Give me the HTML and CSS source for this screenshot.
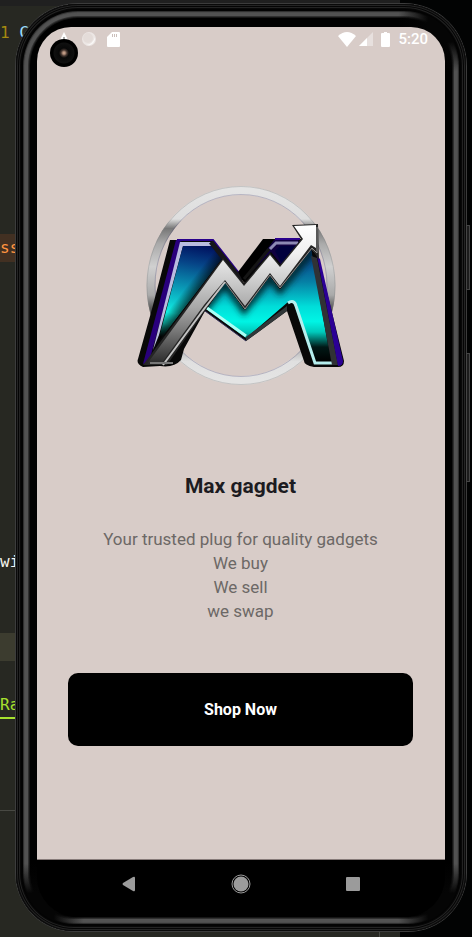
FILE: index.html
```html
<!DOCTYPE html>
<html lang="en">
<head>
<meta charset="utf-8">
<meta name="viewport" content="width=device-width, initial-scale=1">
<title>Max gagdet</title>
<link rel="stylesheet" href="styles.css">
</head>
<body>
<div class="desktop">
  <div class="editor">
    <div class="editor-bar"></div>
    <div class="code first"><span class="number">1</span> <span class="symbol">C</span></div>
    <div class="code match">ss</div>
    <div class="code plain">wi</div>
    <div class="code current"></div>
    <div class="code type"><span>Ra</span></div>
    <div class="editor-panel"></div>
  </div>

  <div class="phone">
    <i class="side-key power"></i>
    <i class="side-key volume"></i>
    <div class="screen">
      <header class="status">
        <div class="status-group">
          <svg class="warning" viewBox="0 0 14 14" width="14" height="14"><path d="M7 0 14 14H0z" fill="#fff"/><path d="M6 5h2v4H6z" fill="#aaa"/></svg>
          <svg viewBox="0 0 16 16" width="16" height="16"><circle cx="8" cy="8" r="7" fill="#fff" opacity=".5"/><circle cx="7" cy="7" r="5" fill="#d9cdc9" opacity=".4"/><path d="M14 6A7 7 0 0 1 5 14Q12 13 14 6" fill="#fff" opacity=".7"/></svg>
          <svg viewBox="0 0 13 15" width="13" height="15"><path d="M5 0h7a1 1 0 0 1 1 1v13a1 1 0 0 1-1 1H1a1 1 0 0 1-1-1V5z" fill="#fff"/><path d="M5 2h1v3H5zM7 2h1v3H7zM9 2h1v3H9z" fill="#cbbfbb"/></svg>
        </div>
        <div class="status-group right">
          <svg viewBox="0 0 18 15" width="18" height="15"><path d="M0 4Q9-4 18 4L9 15z" fill="#fff"/></svg>
          <svg class="signal" viewBox="0 0 14 14" width="14" height="14"><path d="M14 0v14H0z" fill="#fff" opacity=".4"/><path d="M8 6v8H0z" fill="#fff"/></svg>
          <svg class="battery" viewBox="0 0 9 15" width="9" height="15"><path d="M3 0h3v1h2q1 0 1 1v12q0 1-1 1H1q-1 0-1-1V2q0-1 1-1h2z" fill="#fff"/></svg>
          <time>5:20</time>
        </div>
      </header>
      <i class="camera"></i>

      <main class="welcome">
        <svg class="logo" viewBox="126 175 230 220" width="230" height="220" role="img" aria-label="Max gagdet logo">
          <defs>
            <linearGradient id="ring" x1="0" y1="0" x2="0" y2="1">
              <stop offset="0" stop-color="#e4e4e4"/><stop offset=".15" stop-color="#dedede"/><stop offset=".2" stop-color="#777"/><stop offset=".28" stop-color="#aaa"/><stop offset=".4" stop-color="#d0d0d0"/><stop offset=".55" stop-color="#aaa"/><stop offset=".65" stop-color="#333"/><stop offset=".82" stop-color="#aaa"/><stop offset=".9" stop-color="#e0e0e0"/><stop offset="1" stop-color="#e4e4e4"/>
            </linearGradient>
            <linearGradient id="leftFace" gradientUnits="userSpaceOnUse" x1="196" y1="244" x2="180" y2="340">
              <stop offset="0" stop-color="#00105e"/><stop offset=".2" stop-color="#064487"/><stop offset=".5" stop-color="#0aa3bb"/><stop offset=".74" stop-color="#10f0e4"/><stop offset=".86" stop-color="#0cb7a9"/><stop offset="1" stop-color="#000"/>
            </linearGradient>
            <linearGradient id="leftShade" gradientUnits="userSpaceOnUse" x1="180" y1="295" x2="193" y2="305">
              <stop offset="0" stop-color="#000" stop-opacity="0"/><stop offset="1" stop-color="#000" stop-opacity=".9"/>
            </linearGradient>
            <linearGradient id="rightFace" gradientUnits="userSpaceOnUse" x1="0" y1="255" x2="0" y2="362">
              <stop offset="0" stop-color="#053b86"/><stop offset=".25" stop-color="#0680a5"/><stop offset=".48" stop-color="#00ddd9"/><stop offset=".62" stop-color="#00f5e5"/><stop offset=".72" stop-color="#00c9bb"/><stop offset=".86" stop-color="#001816"/><stop offset="1" stop-color="#000"/>
            </linearGradient>
            <linearGradient id="metal" gradientUnits="userSpaceOnUse" x1="0" y1="225" x2="0" y2="367">
              <stop offset="0" stop-color="#fff"/><stop offset=".2" stop-color="#f0f0f0"/><stop offset=".38" stop-color="#cfcfcf"/><stop offset=".58" stop-color="#a8a8a8"/><stop offset=".75" stop-color="#777"/><stop offset="1" stop-color="#222"/>
            </linearGradient>
            <filter id="soft" x="-20%" y="-20%" width="140%" height="140%"><feGaussianBlur stdDeviation="3"/></filter>
            <clipPath id="rightClip"><path d="M225 283 244 310 270 277 280 290 311 249 331 362H314L294 302H288L246 338 207 309z"/></clipPath>
          </defs>
          <ellipse cx="241" cy="285.5" rx="90" ry="95" fill="none" stroke="url(#ring)" stroke-width="9"/>
          <ellipse cx="241" cy="285.5" rx="94" ry="99" fill="none" stroke="#888" stroke-width="1" opacity=".35"/>
          <ellipse cx="241" cy="285.5" rx="86" ry="91" fill="none" stroke="#4f4a78" stroke-width="1" opacity=".3"/>

          <path d="M170 240H213L244 283 264 239H302L318 256 344 361Q344 367 338 367H314Q304 365 304 361L287 311 246 341 205 311 184 349 181 360Q174 368 160 366L143 367Q136 364 138 359L152 309z" fill="#080808"/>
          <path d="M177 240H213L242 277" fill="none" stroke="#29008b" stroke-width="2"/>
          <path d="M176 240 143 364 149 362 182 242z" fill="#29007c"/>
          <path d="M180 242H210L215 246H183L159 335 153 350z" fill="#b9bce0"/>
          <path d="M183 246H213L223 257 158 342z" fill="url(#leftFace)"/>
          <path d="M183 246H213L223 257 158 342z" fill="url(#leftShade)"/>
          <path d="M211 242 242 281" stroke="#161619" stroke-width="5"/>
          <path d="M238 272 263 239H274L244 283z" fill="#000"/>
          <path d="M244 279 274 240H298L304 246 283 267 271 252z" fill="#100040"/>
          <path d="M244 279 269 249" stroke="#151515" stroke-width="3"/>
          <path d="M270 249 276 243H298" fill="none" stroke="#8d89b4" stroke-width="3"/>
          <path d="M275 239H300" stroke="#29008b" stroke-width="2"/>
          <path d="M275 251 280 246H298L282 264z" fill="#00003d"/>

          <path d="M225 283 244 310 270 277 280 290 311 249 331 362H314L294 302H288L246 338 207 309z" fill="url(#rightFace)"/>
          <g clip-path="url(#rightClip)"><path d="M201 314 225 283 244 310 270 277 280 290 314 249" fill="none" stroke="#002629" stroke-width="7" filter="url(#soft)"/></g>
          <path d="M207 308 246 336" stroke="#a9fff5" stroke-width="3"/>
          <path d="M205 311 246 341" stroke="#33305a" stroke-width="1"/>
          <path d="M246 337 287 306V311L246 341z" fill="#303739"/>
          <path d="M287 309 292 303 311 362 306 361z" fill="#080808"/>
          <path d="M288 303Q294 299 296 306L315 363H335" fill="none" stroke="#b5eeee" stroke-width="3"/>
          <path d="M311 256 317 258 338 365H332z" fill="#303235"/>
          <path d="M317 256 320 259 343 361Q343 366 338 366z" fill="#2b0095"/>

          <path d="M143 365 223 258 244 284 270 253 280 265 301 239 292 225 318 224 319 260 312 249 280 289 270 276 245 310 225 283 207 308 167 365z" fill="#252525"/>
          <path d="M147 364 223 260 244 286 270 255 280 267 303 239 294 226 316 225 316 248 311 245 280 286 270 273 245 306 225 280 204 305 161 364z" fill="url(#metal)"/>
          <path d="M317 227 317 253 312 248 280 288 270 275 245 309 225 282" fill="none" stroke="#8d8d8d" stroke-width="1"/>
          <path d="M163 365 204 309 225 282" fill="none" stroke="#c2c2c2" stroke-width="2"/>
          <path d="M150 363H173" stroke="#777" stroke-width="2"/>
        </svg>
        <h1>Max gagdet</h1>
        <p>Your trusted plug for quality gadgets<br>We buy<br>We sell<br>we swap</p>
        <button class="shop" type="button">Shop Now</button>
      </main>

      <nav class="system-nav">
        <button type="button" aria-label="Back"><svg viewBox="0 0 20 20" width="20" height="20"><path d="M14 3Q16 2 16 4V16Q16 18 14 17L4 11Q3 10 4 9z" fill="#9b9b9b"/></svg></button>
        <button type="button" aria-label="Home"><svg viewBox="0 0 20 20" width="20" height="20"><circle cx="10" cy="10" r="9" fill="none" stroke="#9b9b9b" stroke-width="1"/><circle cx="10" cy="10" r="7.5" fill="#9b9b9b"/></svg></button>
        <button type="button" aria-label="Recent apps"><svg viewBox="0 0 20 20" width="20" height="20"><rect x="3" y="3" width="14" height="14" rx="1" fill="#9b9b9b"/></svg></button>
      </nav>
    </div>
  </div>
</div>
</body>
</html>
```

FILE: styles.css
```css
* {
  box-sizing: border-box;
}

body {
  margin: 0;
  background: #020303;
  font-family: Roboto, "Liberation Sans", sans-serif;
}

.desktop {
  display: grid;
  min-height: 100vh;
  overflow: hidden;
}

.editor,
.phone {
  grid-area: 1 / 1;
}

.editor {
  display: flex;
  flex-direction: column;
  margin-right: 72px;
  background: #272822;
  font: 16px/28px "DejaVu Sans Mono", monospace;
}

.editor-bar {
  height: 6px;
  background: #202020;
}

.code {
  flex: none;
  height: 28px;
}

.first {
  margin-top: 13px;
}

.number {
  color: #a58a10;
}

.symbol {
  color: #9cdcff;
}

.match {
  margin-top: 187px;
  background: #423022;
  color: #ff9440;
}

.plain {
  margin-top: 286px;
  color: #f4f4ee;
}

.current {
  margin-top: 57px;
  background: #3c3c2f;
}

.type {
  margin-top: 30px;
  color: #a6e22e;
}

.type span {
  display: inline-block;
  height: 28px;
  border-bottom: 2px solid #a6e22e;
}

.editor-panel {
  flex: 1;
  margin-top: 91px;
  margin-right: 20px;
  border-top: 1px solid #484943;
  border-right: 1px solid #484943;
}

.phone {
  position: relative;
  display: flex;
  min-height: calc(100vh - 10px);
  margin: 4px 6px 6px 16px;
  padding: 23px 21px 14px;
  border-radius: 62px 62px 58px 58px;
  background: #000;
  box-shadow:
    0 0 0 1px #3c3c3c,
    inset 0 0 0 1px #0a0a0a,
    inset 0 0 0 2px #242424,
    inset 0 0 0 3px #050505,
    inset 0 0 0 4px #232323,
    inset 0 0 0 5px #080808,
    inset 0 0 0 7px #030303,
    inset 0 0 0 8px #303030,
    inset 0 0 0 9px #4c4c4c,
    inset 0 0 0 12px #525252,
    inset 0 0 0 13px #303030,
    inset 0 0 0 14px #161616;
}

/* The metal rim falls into shadow at three of the corners. */
.phone::before {
  position: absolute;
  inset: 6px;
  border-radius: 56px 56px 52px 52px;
  background:
    radial-gradient(circle at calc(100% - 12px) 12px, #050505 20px, transparent 50px),
    radial-gradient(circle at calc(100% - 12px) calc(100% - 12px), #050505 20px, transparent 50px),
    radial-gradient(circle at 12px calc(100% - 12px), #050505 20px, transparent 50px);
  content: "";
}

.side-key {
  position: absolute;
  left: 100%;
  width: 4px;
  border: 1px solid #444;
  background: #1c1c1c;
}

.power {
  top: 221px;
  height: 65px;
}

.volume {
  top: 349px;
  height: 129px;
}

.screen {
  position: relative;
  display: flex;
  flex: 1;
  flex-direction: column;
  min-width: 0;
  overflow: hidden;
  border-radius: 34px 34px 40px 40px;
  background: #000;
}

.status {
  display: flex;
  justify-content: space-between;
  height: 24px;
  padding: 0 17px 0 20px;
  background: #d8ccc8;
  color: #fff;
  font-size: 15px;
  font-weight: 500;
  line-height: 24px;
}

.status-group {
  display: flex;
  align-items: center;
  gap: 10px;
}

.right {
  gap: 0;
}

.signal {
  margin-left: 3px;
}

.battery {
  margin: 0 8px;
}

.camera {
  position: absolute;
  top: 12px;
  left: 13px;
  width: 28px;
  height: 28px;
  border-radius: 50%;
  background: radial-gradient(circle, #c09a84 0 1px, #44352f 3px, #080808 5px, #101010 10px, #000 11px);
}

.welcome {
  display: flex;
  flex: 1;
  flex-direction: column;
  align-items: center;
  padding: 124px 32px 24px 31px;
  border-bottom: 1px solid #877b79;
  background: #d8ccc8;
  text-align: center;
}

.logo {
  flex: none;
}

h1 {
  margin: 78px 0 28px;
  color: #1c1b21;
  font-size: 21px;
  font-weight: 700;
  line-height: 26px;
}

p {
  margin: 0 0 50px;
  color: #6c6866;
  font-size: 17px;
  line-height: 24px;
}

.shop {
  width: 100%;
  height: 73px;
  border: 0;
  border-radius: 10px;
  background: #000;
  color: #fff;
  font: 700 16px/24px Roboto, "Liberation Sans", sans-serif;
}

.system-nav {
  display: flex;
  justify-content: center;
  gap: 92px;
  height: 57px;
  padding-top: 14px;
}

.system-nav button {
  display: block;
  width: 20px;
  height: 20px;
  padding: 0;
  border: 0;
  background: none;
}

.system-nav svg {
  display: block;
}
```
